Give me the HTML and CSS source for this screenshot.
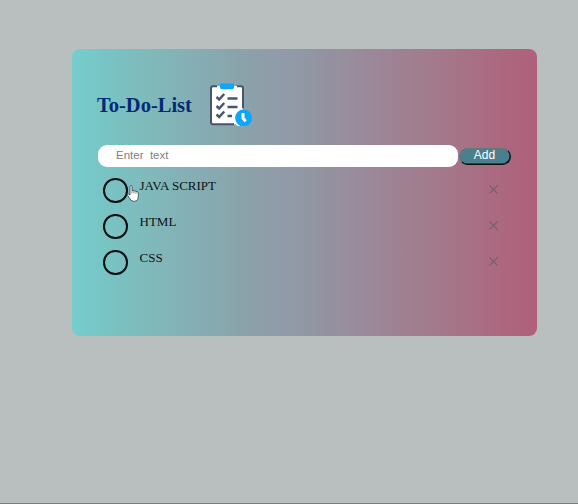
FILE: index.html
```html
<!DOCTYPE html>
<html lang="en">
<head>
<meta charset="utf-8">
<title>To-Do-List</title>
<link rel="stylesheet" href="styles.css">
</head>
<body>
<main class="card">
  <header class="header">
    <h1 class="title">To-Do-List</h1>
    <svg class="logo" width="44" height="44" viewBox="0 0 44 44" fill="none">
      <rect x="2.3" y="4.3" width="31.4" height="38" rx="2" fill="#fff"/>
      <path d="M8 4.200H4a2 2 0 0 0-2 2v34a2 2 0 0 0 2 2h21M28 4.200h4a2 2 0 0 1 2 2v20" stroke="#465672" stroke-width="2"/>
      <path d="M11 1.500h14v4q0 1.700-2 1.700h-10q-2 0-2-1.700z" fill="#0ea5fb"/>
      <path d="M7.500 15l2.700 2.500 5-5.500M7.500 24l2.700 2.500 5-5.500M7.500 32.500l2.700 2.500 5-5.500M18.500 16.400h10M18.500 25.100h10M18.500 34h4.500" stroke="#465672" stroke-width="2.500"/>
      <circle cx="34" cy="36" r="9.500" fill="#fff" clip-path="inset(0 10px 0 0)"/>
      <circle cx="34.600" cy="36" r="8.500" fill="#0ea5fb"/>
      <path d="M34 31v5.300l2.700 3" stroke="#fff" stroke-width="3"/>
    </svg>
  </header>
  <form class="entry">
    <input class="field" type="text" placeholder="Enter&nbsp; text">
    <button class="add" type="button">Add</button>
  </form>
  <ul class="list">
    <li class="item"><span class="check"></span><span class="label">JAVA SCRIPT</span>
      <svg class="remove" viewBox="0 0 9 9"><path d="M.5.5l8 8M8.500.5l-8 8"/></svg></li>
    <li class="item"><span class="check"></span><span class="label">HTML</span>
      <svg class="remove" viewBox="0 0 9 9"><path d="M.5.5l8 8M8.500.5l-8 8"/></svg></li>
    <li class="item"><span class="check"></span><span class="label">CSS</span>
      <svg class="remove" viewBox="0 0 9 9"><path d="M.5.5l8 8M8.500.5l-8 8"/></svg></li>
  </ul>
</main>
<svg class="pointer" width="12" height="17" viewBox="0 0 12 17">
  <path d="M3 1.500Q3 .5 4 .5T5 1.500V5.500Q6.200 4.700 7 6 8.200 5.200 9 6.500 11 6 11.300 8V12Q11.200 14.500 9.500 15.800 6.500 17.200 4 15.300L1 11Q-.2 9.200 1 8.900 2 8.700 3 10Z" fill="#fff" stroke="#333f44" stroke-width=".8"/>
  <path d="M5 5.500v3M7 6v2.500M9 6.500v2.300" stroke="#555f64" stroke-width=".7"/>
</svg>
</body>
</html>
```

FILE: styles.css
```css
* {
  box-sizing: border-box;
}

body {
  margin: 0;
  height: 504px;
  overflow: hidden;
  padding: 49px 0 0 71.500px;
  background: #b8bfbe;
  border-bottom: 1px solid #777d7c;
  font-family: "Liberation Serif", "Times New Roman", serif;
}

.card {
  width: 465px;
  height: 287.400px;
  padding: 33px 25px 0 25.500px;
  border-radius: 8px;
  background: linear-gradient(90deg, #75cfcc 0%, #78c4c5 7%, #80b9ba 17%, #86abb2 29%, #8aa3aa 36%, #909ba9 45%, #9295a2 52%, #9c8799 65%, #a27b8c 77%, #aa6c82 89%, #b05f7a 100%);
}

.header {
  display: flex;
  align-items: center;
  height: 44px;
  gap: 17px;
}

.title {
  margin: 2px 0 0;
  width: 95px;
  font-size: 20.500px;
  line-height: 24px;
  white-space: nowrap;
  color: #032b75;
}

.logo {
  display: block;
}

.entry {
  display: flex;
  align-items: center;
  margin: 19px 0 0 1px;
  gap: 1px;
}

.field {
  width: 359.500px;
  height: 22px;
  padding: 0 18px 2px;
  border: 0;
  border-radius: 9px;
  background: #fff;
  font: 11.500px "Liberation Sans", Arial, sans-serif;
}

.field::placeholder {
  color: #858080;
  opacity: 1;
}

.add {
  width: 52px;
  height: 17px;
  padding: 0 0 1px;
  border: 1px solid;
  border-color: #65787d #080d0e #080d0e #65787d;
  box-shadow: inset -0.500px -0.500px 0 #080d0e;
  border-radius: 9px;
  background: #4a7f8d;
  color: #fff;
  font: 12px/13px "Liberation Sans", Arial, sans-serif;
}

.list {
  margin: 8px 0 0;
  padding: 0;
  list-style: none;
}

.item {
  display: flex;
  height: 36px;
  padding: 3px 14px 0 6px;
}

.check {
  width: 24.500px;
  height: 24.500px;
  border: 2px solid #080f10;
  border-radius: 50%;
}

.label {
  flex: 1;
  margin: -1px 0 0 12px;
  font-size: 13px;
  line-height: 17px;
  color: #0b1214;
}

.remove {
  width: 9px;
  height: 9px;
  margin-top: 7px;
  fill: none;
  stroke: #75616f;
  stroke-width: 1.100;
}

.pointer {
  position: absolute;
  left: 127px;
  top: 185px;
}
```
